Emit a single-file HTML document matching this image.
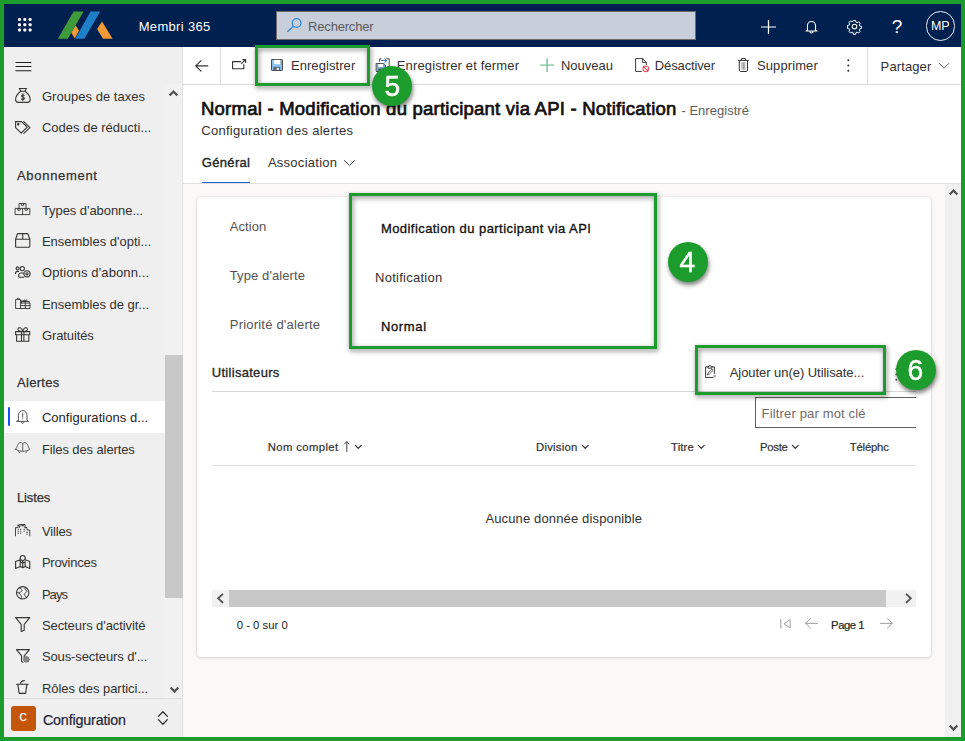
<!DOCTYPE html>
<html lang="fr">
<head>
<meta charset="utf-8">
<title>Membri 365 - Configuration des alertes</title>
<style>
*{box-sizing:border-box;margin:0;padding:0}
html,body{width:965px;height:741px;overflow:hidden;background:#fff}
body{font-family:"Liberation Sans",sans-serif;font-size:14px;color:#323130;position:relative}
.b{position:absolute}
.t{position:absolute;white-space:nowrap;line-height:20px;height:20px}
#top{left:0;top:0;width:965px;height:47px;background:#00204f}
#side{left:0;top:47px;width:182px;height:694px;background:#efefef}
#sideborder{left:182px;top:47px;width:1px;height:694px;background:#e1dfdd}
#cmdline{left:183px;top:84px;width:782px;height:1px;background:#dddbd9}
#hdrline{left:183px;top:183px;width:782px;height:1px;background:#e1dfdd}
#main{left:183px;top:184px;width:762px;height:553px;background:#faf9f8}
#vscroll{left:945px;top:184px;width:16px;height:553px;background:#f0f0f0}
#card{left:197px;top:197px;width:734px;height:460px;background:#fff;border-radius:4px;box-shadow:0 1px 3px rgba(0,0,0,.12),0 0 3px rgba(0,0,0,.10)}
#frame{left:0;top:0;width:965px;height:741px;border:4px solid #1c9c2c;z-index:50}
.hl{position:absolute;border:3px solid #1c9c2c;filter:drop-shadow(1.2px 2.6px 2.5px rgba(0,0,0,.5));z-index:20}
.badge{position:absolute;width:40px;height:40px;border-radius:50%;background:#1c9c2c;color:#fff;font-size:30px;line-height:40px;text-align:center;box-shadow:1px 3px 4px rgba(0,0,0,.5);z-index:21;-webkit-text-stroke:0.5px #fff}
.badge span{display:inline-block;transform:scaleX(.94);position:relative;top:0.2px;left:-0.9px}
svg{position:absolute;overflow:visible}
.ic{fill:none;stroke:#353433;stroke-width:1.1;stroke-linejoin:round;stroke-linecap:round}
</style>
</head>
<body>
<div class="b" id="top"></div>
<div class="b" id="side"></div>
<div class="b" id="sideborder"></div>
<div class="b" id="cmdline"></div>
<div class="b" id="hdrline"></div>
<div class="b" id="main"></div>
<div class="b" id="vscroll"></div>
<div class="b" id="card"></div>

<!-- TOP BAR -->
<svg style="left:18px;top:18px" width="14" height="14" viewBox="0 0 14 14"><g fill="#fff"><rect x="0" y="0" width="3" height="3" rx="1"/><rect x="5.3" y="0" width="3" height="3" rx="1"/><rect x="10.6" y="0" width="3" height="3" rx="1"/><rect x="0" y="5.3" width="3" height="3" rx="1"/><rect x="5.3" y="5.3" width="3" height="3" rx="1"/><rect x="10.6" y="5.3" width="3" height="3" rx="1"/><rect x="0" y="10.6" width="3" height="3" rx="1"/><rect x="5.3" y="10.6" width="3" height="3" rx="1"/><rect x="10.6" y="10.6" width="3" height="3" rx="1"/></g></svg>
<svg style="left:0;top:0" width="130" height="47" viewBox="0 0 130 47">
 <polygon points="75.7,25.6 79,30.5 74.9,38.6 71.1,32.6" fill="#f29a33"/>
 <polygon points="73.6,11.6 83.6,11.6 67.8,38.8 57.9,38.8" fill="#3f9b3a"/>
 <polygon points="90.6,11.6 100.2,11.6 84.4,38.8 75.3,38.8" fill="#1f80c8"/>
 <polygon points="102,21.6 112.6,38.8 103,38.8 97.1,28.9" fill="#f29a33"/>
</svg>
<div class="b" style="left:276px;top:11px;width:420px;height:29px;background:#c8ceda;border:1px solid #6e6b69;border-radius:0"></div>
<svg style="left:287px;top:18px" width="15" height="14" viewBox="0 0 15 14"><circle cx="9.6" cy="5" r="4.3" fill="none" stroke="#2b88d8" stroke-width="1.3"/><path d="M6.5 8.2 L0.6 13.4" stroke="#2b88d8" stroke-width="1.3" fill="none" stroke-linecap="round"/></svg>
<svg style="left:761px;top:20px" width="15" height="14" viewBox="0 0 15 14"><path d="M7.5 0V14" stroke="#fff" stroke-width="1.3" fill="none"/><path d="M0 7H15" stroke="#fff" stroke-width="1" fill="none"/></svg>
<svg style="left:805px;top:20px" width="13" height="14" viewBox="0 0 13 14"><path d="M2.5 10V5.5a4 4 0 0 1 8 0V10l1.5 1H1zM5 11.5a1.5 1.5 0 0 0 3 0" stroke="#fff" stroke-width="1.1" fill="none" stroke-linejoin="round"/></svg>
<svg style="left:847px;top:19.3px" width="15" height="15" viewBox="0 0 15 15"><circle cx="7.5" cy="7.5" r="2.3" fill="none" stroke="#fff" stroke-width="1.1"/><path d="M6.3 0.8h2.4l.4 1.9 1.2.6 1.7-1 1.7 1.7-1 1.7.6 1.2 1.9.4v2.4l-1.9.4-.6 1.2 1 1.7-1.7 1.7-1.7-1-1.2.6-.4 1.9H6.3l-.4-1.9-1.2-.6-1.7 1-1.7-1.7 1-1.7-.6-1.2-1.9-.4V6.3l1.9-.4.6-1.2-1-1.7L3 1.3l1.7 1 1.2-.6z" fill="none" stroke="#fff" stroke-width="1.1" stroke-linejoin="round" transform="translate(0.75 0.75) scale(0.9)"/></svg>
<div class="b" style="left:925.5px;top:11px;width:29.5px;height:29.5px;border:1.1px solid rgba(255,255,255,.92);border-radius:50%"></div>

<!-- SIDEBAR -->
<div class="b" style="left:165px;top:84px;width:17px;height:614px;background:#f1f1f1"></div>
<div class="b" style="left:4px;top:401px;width:161px;height:32px;background:#fff"></div>
<div class="b" style="left:7.5px;top:407px;width:2.5px;height:19px;background:#1353f5;border-radius:1px"></div>
<div class="b" style="left:165px;top:355px;width:17.5px;height:243px;background:#c8c8c8"></div>
<div class="b" style="left:4px;top:698px;width:178px;height:1px;background:#dcdcdc"></div>
<div class="b" style="left:11px;top:706px;width:25px;height:24.7px;background:#c4560c;border-radius:3px"></div>
<svg style="left:16px;top:62px" width="16" height="10" viewBox="0 0 16 10" ><g class="ic"><path d="M0 0.5H15M0 4.5H15M0 8.7H15" stroke="#201f1e" stroke-width="1.1"/></g></svg>
<svg style="left:15px;top:88px" width="16" height="15" viewBox="0 0 16 15" ><g class="ic"><path d="M4.3 0.5H11.5L9.9 3.3H5.9Z"/><path d="M5.9 3.3C3.5 5 0.6 8.6 0.6 11.6C0.6 13.6 1.8 14.4 3.4 14.4H12.4C14 14.4 15.2 13.6 15.2 11.6C15.2 8.6 12.3 5 9.9 3.3"/><path d="M9.3 7.2C8.3 6.5 6.6 6.7 6.6 7.9C6.6 9.3 9.4 8.9 9.4 10.4C9.4 11.6 7.5 11.8 6.4 11M7.9 5.8V12.4" stroke-width="1.05"/></g></svg>
<svg style="left:15px;top:121px" width="16" height="13" viewBox="0 0 16 13" ><g class="ic"><path d="M0.6 0.6H6.6L12.2 6.2L6.2 12.2L0.6 6.6Z"/><circle cx="3.3" cy="3.3" r="0.7"/><path d="M8.8 0.6L14.9 6.6L8.9 12.4"/></g></svg>
<svg style="left:15px;top:203px" width="16" height="12" viewBox="0 0 16 12" ><g class="ic"><path d="M4 5.4V0.5H11V5.4M0.5 5.4H14.8V11.6H0.5ZM7.6 5.4V11.6M6.3 0.5V2.3H8.7V0.5M2.8 5.4V7.2H5.2V5.4M10 5.4V7.2H12.4V5.4" stroke-width="0.9"/></g></svg>
<svg style="left:15px;top:233px" width="16" height="15" viewBox="0 0 16 15" ><g class="ic"><path d="M0.6 6.2L2.3 1.2C2.5 0.7 2.8 0.6 3.2 0.6H12.2C12.6 0.6 12.9 0.7 13.1 1.2L14.8 6.2V13.2C14.8 13.9 14.4 14.3 13.7 14.3H1.7C1 14.3 0.6 13.9 0.6 13.2ZM0.6 6.2H14.8M7.7 0.6V6.2" stroke-width="1.1"/></g></svg>
<svg style="left:15px;top:266px" width="16" height="12" viewBox="0 0 16 12" ><g class="ic"><circle cx="2.6" cy="2.4" r="1.5"/><circle cx="7.3" cy="2.6" r="2.1"/><path d="M0.5 7.5C0.5 6 1.4 5.4 2.6 5.4H3.6M3.6 10.8C3.6 10.8 3.2 7 6 7H8.3M4.3 11.3H8.6"/><circle cx="12" cy="7.8" r="3.1"/><circle cx="12" cy="7.8" r="1.1"/></g></svg>
<svg style="left:15px;top:297px" width="16" height="12" viewBox="0 0 16 12" ><g class="ic"><path d="M5.6 11.5H0.6V2.5H5.6V11.5M2 2.5C2 0.2 4.3 0.2 4.3 2.5M5.6 4H10M5.6 6H15V11.5H5.6M6.4 6V4.4H14.2V6M10.3 4.4V11.5M5.6 8.6H15M8.8 4.2C8 2.6 10.3 2.6 10.3 4.2C10.3 2.6 12.6 2.6 11.8 4.2" stroke-width="0.9"/></g></svg>
<svg style="left:15px;top:327px" width="16" height="15" viewBox="0 0 16 15" ><g class="ic"><path d="M0.6 4.6H14.8V7.8H0.6ZM1.6 7.8V14.3H13.8V7.8M6.5 4.6V14.3M8.9 4.6V14.3M7.7 4.4C5.4 4.6 2.4 3.8 3 1.8C3.6 -0.2 6.8 0.4 7.7 4.4C8.6 0.4 11.8 -0.2 12.4 1.8C13 3.8 10 4.6 7.7 4.4" stroke-width="1.05"/></g></svg>
<svg style="left:16px;top:410px" width="14" height="14" viewBox="0 0 14 14" ><g class="ic"><path d="M2.4 10.4V5.6C2.4 -1.1 11 -1.1 11 5.6V10.4L12.6 11.4H0.8ZM5.3 11.6C5.3 13.9 8.1 13.9 8.1 11.6M6.7 3.2V7.2M6.7 8.8V9" stroke="#505050" stroke-width="1"/></g></svg>
<svg style="left:15px;top:442px" width="16" height="12" viewBox="0 0 16 12" ><g class="ic"><path d="M0.6 7.2C2.6 5.6 2.2 0.8 5.6 0.6C6.9 0.5 7.6 1.2 7.7 2.2C7.8 1.2 8.5 0.5 9.8 0.6C13.2 0.8 12.8 5.6 14.8 7.2C13 8.6 9.6 9.6 7.7 9.2C5.8 9.6 2.4 8.6 0.6 7.2ZM7.7 2.2V9.2M3.6 9.6L4.6 10.8M11.8 9.6L10.8 10.8" stroke="#505050" stroke-width="0.9"/></g></svg>
<svg style="left:15px;top:524px" width="16" height="12" viewBox="0 0 16 12" ><g class="ic"><path d="M0.5 11.8V3.6H3V1.6H4.6V3.6M3 1.6V0.6M4.6 0.5H10V3.6M6 0.5V2M7.4 0.5V2M8.7 0.5V2M10 3.6H12V6H14.8V11.8" stroke-width="0.9"/><path d="M2.6 5.2h1.2M5 5.2h1.2M2.6 7.2h1.2M5 7.2h1.2M2.6 9.2h1.2M5 9.2h1.2M8.6 5.2h1.2M8.6 7.2h1.2M11.4 8.4h1.2M11.4 10.2h1.2" stroke-width="1.1" stroke-linecap="butt"/></g></svg>
<svg style="left:15px;top:555px" width="16" height="14" viewBox="0 0 16 14" ><g class="ic"><circle cx="7.7" cy="3" r="2.5"/><path d="M0.6 6.6L5.2 4.8V11.6L0.6 13.4ZM5.2 6.8L7.7 8L10.2 6.8V11.6L7.7 12.8L5.2 11.6M10.2 4.8L14.8 6.6V13.4L10.2 11.6M7.7 5.5V12.8"/></g></svg>
<svg style="left:16px;top:586px" width="14" height="14" viewBox="0 0 14 14" ><g class="ic"><circle cx="6.7" cy="6.8" r="6.2"/><path d="M3.2 1.8C4.4 3 6.2 2.6 6 4.6C5.8 6 3.4 5.6 3.2 7.2C3 8.8 5.4 8.6 5.6 10.2C5.7 11.4 5.2 12.2 5 12.8M9.8 1.4C8.6 2.4 8.8 3.8 10 4.2C11.2 4.6 11 6 10 6.6C8.8 7.4 7.8 8 8.6 9.4C9.4 10.6 10.4 10 10.6 11.6M0.6 6.4C1.8 6 2.6 6.6 3.2 7.2" stroke-width="0.9"/></g></svg>
<svg style="left:15px;top:617px" width="16" height="15" viewBox="0 0 16 15" ><g class="ic"><path d="M0.6 0.6H14.8L9.2 7.4V13.2L6.2 14.4V7.4Z" stroke-width="1.1"/></g></svg>
<svg style="left:16px;top:649px" width="14" height="14" viewBox="0 0 14 14" ><g class="ic"><path d="M0.5 0.6H13.4L8.2 6.8V9M5.6 6.8V12.6L7 13.2M5.6 6.8L0.5 0.6" stroke-width="1.1"/><circle cx="10.4" cy="10.4" r="2.9" fill="#8a8886" stroke="#6a6866" stroke-width="0.6"/></g></svg>
<svg style="left:16px;top:680px" width="13" height="14" viewBox="0 0 13 14" ><g class="ic"><path d="M0.5 4.2H12.2M1.8 4.2L3.2 13.4H9.6L11 4.2M4.6 4C4.6 1.6 6 0.6 8.4 0.6" stroke="#323130" stroke-width="1.1"/></g></svg>
<svg style="left:169px;top:90px" width="9" height="6" viewBox="0 0 9 6" ><g class="ic"><path d="M0.7 5.6L4.5 1.6L8.3 5.6" stroke="#505050" stroke-width="2.2" stroke-linecap="butt" stroke-linejoin="miter"/></g></svg>
<svg style="left:169.5px;top:686.5px" width="9" height="6" viewBox="0 0 9 6" ><g class="ic"><path d="M0.7 0.6L4.5 4.6L8.3 0.6" stroke="#505050" stroke-width="2.2" stroke-linecap="butt" stroke-linejoin="miter"/></g></svg>
<svg style="left:158px;top:711px" width="10" height="14" viewBox="0 0 10 14" ><g class="ic"><path d="M0.4 5.4L4.9 0.8L9.4 5.4M0.4 8.6L4.9 13.2L9.4 8.6" stroke="#2b2a29" stroke-width="1.25"/></g></svg>

<!-- COMMAND BAR -->
<div class="b" style="left:220px;top:47px;width:1px;height:37px;background:#e1dfdd"></div>
<div class="b" style="left:867px;top:47px;width:1px;height:37px;background:#e1dfdd"></div>
<svg style="left:195px;top:59.5px" width="13" height="12" viewBox="0 0 13 12" ><g class="ic"><path d="M12.8 5.9H0.8M6 0.6L0.7 5.9L6 11.2" stroke="#323130" stroke-width="1.1"/></g></svg>
<svg style="left:232px;top:59px" width="15" height="11" viewBox="0 0 15 11" ><g class="ic"><path d="M8.6 2.6H0.6V9.8H11.8V5.6M9.4 4.6L13.4 0.8M10.8 0.6H13.6V3.4" stroke="#323130" stroke-width="1.1"/></g></svg>
<svg style="left:271px;top:59px" width="12" height="12" viewBox="0 0 12 12" ><g class="ic"><rect x="0.5" y="0.5" width="11" height="11" rx="0.6" fill="#86c3f7" stroke="#4a4a4a" stroke-width="1"/><rect x="2.9" y="0.9" width="6.8" height="4.3" fill="#fff" stroke="none"/><path d="M9.9 1V5.2" stroke="#6a6a6a" stroke-width="0.6"/><rect x="2.4" y="7.8" width="6.8" height="3.4" fill="#5f6670" stroke="none"/><rect x="5.6" y="8.8" width="2.4" height="2.2" fill="#d8dde2" stroke="none"/></g></svg>
<svg style="left:376px;top:58px" width="14" height="14" viewBox="0 0 14 14" ><g class="ic"><path d="M5.2 0.8H3.6V3.2M10.6 0.8H13.2V8.6H11.6" stroke="#3b3a39" stroke-width="0.9"/><path d="M5.4 2.6H10.6M8.8 0.8L10.6 2.6L8.8 4.4" stroke="#2b6fc2" stroke-width="1"/><path d="M0.5 5.6H7.8L9.5 7.2V13.5H0.5Z" fill="#7da7d6" stroke="#3b3a39" stroke-width="0.9"/><rect x="2.3" y="6" width="4.8" height="3" fill="#fff" stroke="none"/><rect x="2.3" y="10.6" width="5" height="2.7" fill="#55606c" stroke="none"/></g></svg>
<svg style="left:540px;top:58px" width="14" height="14" viewBox="0 0 14 14" ><g class="ic"><path d="M7.1 0.2V14M0.2 7.1H14" stroke="#74c493" stroke-width="1.4" stroke-linecap="butt"/></g></svg>
<svg style="left:635px;top:58px" width="14" height="14" viewBox="0 0 14 14" ><g class="ic"><path d="M6.4 13.4H0.6V0.6H7.6L11.4 4.4V6.6M7.6 0.6V4.4H11.4" stroke="#3b3a39" stroke-width="1"/><circle cx="10.8" cy="10.8" r="2.9" stroke="#ea4a5a" stroke-width="1.05"/><path d="M8.8 8.8L12.8 12.8" stroke="#ea4a5a" stroke-width="1.05"/></g></svg>
<svg style="left:738px;top:58px" width="11" height="14" viewBox="0 0 11 14" ><g class="ic"><path d="M0.4 2.4H10.4M3.4 2.2V0.6H7.4V2.2M1.3 2.4V12.2C1.3 13 1.8 13.5 2.6 13.5H8.2C9 13.5 9.5 13 9.5 12.2V2.4" stroke="#323130" stroke-width="1"/><path d="M4 4.6V11.4M5.4 4.6V11.4M6.8 4.6V11.4" stroke="#8a8886" stroke-width="0.9"/></g></svg>
<svg style="left:847px;top:59px" width="3" height="13" viewBox="0 0 3 13" ><g class="ic"><circle cx="1.3" cy="1.3" r="1" fill="#323130" stroke="none"/><circle cx="1.3" cy="6.5" r="1" fill="#323130" stroke="none"/><circle cx="1.3" cy="11.7" r="1" fill="#323130" stroke="none"/></g></svg>
<svg style="left:939px;top:63px" width="10" height="6" viewBox="0 0 10 6" ><g class="ic"><path d="M0.4 0.5L5.1 5.2L9.8 0.5" stroke="#605e5c" stroke-width="1"/></g></svg>
<svg style="left:344px;top:160px" width="11" height="6" viewBox="0 0 11 6" ><g class="ic"><path d="M0.4 0.5L5.5 5.4L10.6 0.5" stroke="#484644" stroke-width="1"/></g></svg>

<!-- HEADER -->
<div class="b" style="left:202px;top:181.7px;width:47.5px;height:1.4px;background:#1f5fd6"></div>

<!-- FORM -->
<div class="b" style="left:212px;top:391px;width:704px;height:1px;background:#d8d6d4"></div>
<div class="b" style="left:755px;top:397px;width:161px;height:31px;border:1px solid #605e5c;border-right:none;background:#fff"></div>
<div class="b" style="left:212px;top:465px;width:704px;height:1px;background:#e1dfdd"></div>
<div class="b" style="left:212px;top:590px;width:704px;height:17px;background:#f1f1f1"></div>
<div class="b" style="left:229px;top:590px;width:657px;height:17px;background:#c8c8c8"></div>
<svg style="left:705px;top:364.8px" width="11" height="14" viewBox="0 0 11 14" ><g class="ic"><g transform="scale(1,0.93)"><path d="M3 2H0.6V13.4H8M7 2H9.4V9M3 3V1.6H4C4 0.2 6 0.2 6 1.6H7V3Z" stroke="#323130" stroke-width="1"/><path d="M2.6 10.4L3.2 8.2L7 4.4L8.2 5.6L4.4 9.6Z" stroke="#323130" stroke-width="0.8"/><path d="M9.8 10.8V13M8.7 11.9H10.9" stroke="#6f83ad" stroke-width="0.8"/></g></g></svg>
<svg style="left:343.5px;top:441px" width="6" height="11" viewBox="0 0 6 11" ><g class="ic"><path d="M2.8 10.6V0.8M0.5 3L2.8 0.7L5.1 3" stroke="#323130" stroke-width="0.9"/></g></svg>
<svg style="left:354.5px;top:445px" width="7" height="4" viewBox="0 0 7 4" ><g class="ic"><path d="M0.4 0.4L3.3 3.3L6.2 0.4" stroke="#323130" stroke-width="1.2"/></g></svg>
<svg style="left:581.5px;top:445px" width="7" height="4" viewBox="0 0 7 4" ><g class="ic"><path d="M0.4 0.4L3.3 3.3L6.2 0.4" stroke="#323130" stroke-width="1.2"/></g></svg>
<svg style="left:698px;top:445px" width="7" height="4" viewBox="0 0 7 4" ><g class="ic"><path d="M0.4 0.4L3.3 3.3L6.2 0.4" stroke="#323130" stroke-width="1.2"/></g></svg>
<svg style="left:792px;top:445px" width="7" height="4" viewBox="0 0 7 4" ><g class="ic"><path d="M0.4 0.4L3.3 3.3L6.2 0.4" stroke="#323130" stroke-width="1.2"/></g></svg>
<svg style="left:216.5px;top:593px" width="7" height="11" viewBox="0 0 7 11" ><g class="ic"><path d="M6 0.8L1.2 5.3L6 9.8" stroke="#505050" stroke-width="1.8" stroke-linecap="butt" stroke-linejoin="miter"/></g></svg>
<svg style="left:905px;top:593px" width="7" height="11" viewBox="0 0 7 11" ><g class="ic"><path d="M1 0.8L5.8 5.3L1 9.8" stroke="#505050" stroke-width="1.8" stroke-linecap="butt" stroke-linejoin="miter"/></g></svg>
<svg style="left:948.5px;top:189px" width="9" height="6" viewBox="0 0 9 6" ><g class="ic"><path d="M0.7 5.6L4.5 1.6L8.3 5.6" stroke="#505050" stroke-width="2.2" stroke-linecap="butt" stroke-linejoin="miter"/></g></svg>
<svg style="left:948.5px;top:725px" width="9" height="6" viewBox="0 0 9 6" ><g class="ic"><path d="M0.7 0.6L4.5 4.6L8.3 0.6" stroke="#505050" stroke-width="2.2" stroke-linecap="butt" stroke-linejoin="miter"/></g></svg>
<svg style="left:780px;top:618.5px" width="11" height="10" viewBox="0 0 11 10" ><g class="ic"><path d="M0.8 0.4V9.2" stroke="#a19f9d" stroke-width="1"/><path d="M9.8 0.8L4 4.8L9.8 8.8Z" stroke="#a19f9d" stroke-width="1"/></g></svg>
<svg style="left:805px;top:618px" width="13" height="11" viewBox="0 0 13 11" ><g class="ic"><path d="M12.6 5.4H0.8M5.6 0.6L0.7 5.4L5.6 10.2" stroke="#a19f9d" stroke-width="1"/></g></svg>
<svg style="left:879.5px;top:618px" width="13" height="11" viewBox="0 0 13 11" ><g class="ic"><path d="M0.4 5.4H12.2M7.4 0.6L12.3 5.4L7.4 10.2" stroke="#a19f9d" stroke-width="1"/></g></svg>
<svg style="left:895.3px;top:367.5px" width="3" height="13" viewBox="0 0 3 13" ><g class="ic"><circle cx="1.3" cy="1.3" r="1" fill="#605e5c" stroke="none"/><circle cx="1.3" cy="6.5" r="1" fill="#605e5c" stroke="none"/><circle cx="1.3" cy="11.7" r="1" fill="#605e5c" stroke="none"/></g></svg>

<div class="t" style="left:138.7px;top:17.0px;font-size:13px;color:#fff;letter-spacing:0.325px;">Membri 365</div>
<div class="t" style="left:308.1px;top:17.0px;font-size:13px;color:#5c5b5a;letter-spacing:-0.193px;">Rechercher</div>
<div class="t" style="left:930.9px;top:16.1px;font-size:12.5px;color:#fff;letter-spacing:-0.125px;">MP</div>
<div class="t" style="left:891.7px;top:17.0px;font-size:19px;color:#fff;">?</div>
<div class="t" style="left:41.9px;top:86.9px;font-size:13px;color:#323130;letter-spacing:0.036px;">Groupes de taxes</div>
<div class="t" style="left:41.9px;top:117.5px;font-size:13px;color:#323130;letter-spacing:0.014px;">Codes de réducti...</div>
<div class="t" style="left:17.0px;top:165.5px;font-size:13px;color:#323130;letter-spacing:0.693px;-webkit-text-stroke:0.25px #323130;">Abonnement</div>
<div class="t" style="left:41.9px;top:201.2px;font-size:13px;color:#323130;letter-spacing:-0.060px;">Types d'abonne...</div>
<div class="t" style="left:41.9px;top:231.9px;font-size:13px;color:#323130;letter-spacing:-0.004px;">Ensembles d'opti...</div>
<div class="t" style="left:41.9px;top:263.0px;font-size:13px;color:#323130;letter-spacing:0.126px;">Options d'abonn...</div>
<div class="t" style="left:41.9px;top:294.9px;font-size:13px;color:#323130;letter-spacing:-0.024px;">Ensembles de gr...</div>
<div class="t" style="left:41.9px;top:326.0px;font-size:13px;color:#323130;letter-spacing:-0.098px;">Gratuités</div>
<div class="t" style="left:17.0px;top:372.5px;font-size:13px;color:#323130;letter-spacing:0.300px;-webkit-text-stroke:0.25px #323130;">Alertes</div>
<div class="t" style="left:41.9px;top:407.9px;font-size:13px;color:#242424;letter-spacing:0.042px;">Configurations d...</div>
<div class="t" style="left:41.9px;top:439.5px;font-size:13px;color:#323130;letter-spacing:-0.105px;">Files des alertes</div>
<div class="t" style="left:17.0px;top:487.5px;font-size:13px;color:#323130;letter-spacing:-0.140px;-webkit-text-stroke:0.25px #323130;">Listes</div>
<div class="t" style="left:41.9px;top:522.0px;font-size:13px;color:#323130;letter-spacing:-0.135px;">Villes</div>
<div class="t" style="left:41.9px;top:553.1px;font-size:13px;color:#323130;letter-spacing:-0.251px;">Provinces</div>
<div class="t" style="left:41.9px;top:584.9px;font-size:13px;color:#323130;letter-spacing:-0.945px;">Pays</div>
<div class="t" style="left:41.9px;top:616.0px;font-size:13px;color:#323130;letter-spacing:-0.079px;">Secteurs d'activité</div>
<div class="t" style="left:41.9px;top:646.9px;font-size:13px;color:#323130;letter-spacing:-0.104px;">Sous-secteurs d'...</div>
<div class="t" style="left:41.9px;top:678.5px;font-size:13px;color:#323130;letter-spacing:-0.035px;">Rôles des partici...</div>
<div class="t" style="left:19.6px;top:707.7px;font-size:10px;color:#fff;-webkit-text-stroke:0.25px #fff;">C</div>
<div class="t" style="left:42.9px;top:710.1px;font-size:14.3px;color:#1f2638;letter-spacing:-0.155px;-webkit-text-stroke:0.22px #1f2638;">Configuration</div>
<div class="t" style="left:290.9px;top:55.5px;font-size:13px;color:#323130;letter-spacing:0.079px;">Enregistrer</div>
<div class="t" style="left:396.7px;top:55.5px;font-size:13px;color:#323130;letter-spacing:0.158px;">Enregistrer et fermer</div>
<div class="t" style="left:560.9px;top:55.5px;font-size:13px;color:#323130;letter-spacing:0.021px;">Nouveau</div>
<div class="t" style="left:654.8px;top:55.5px;font-size:13px;color:#323130;letter-spacing:-0.128px;">Désactiver</div>
<div class="t" style="left:757.0px;top:55.5px;font-size:13px;color:#323130;letter-spacing:0.100px;">Supprimer</div>
<div class="t" style="left:880.6px;top:56.5px;font-size:13px;color:#323130;letter-spacing:0.114px;">Partager</div>
<div class="t" style="left:201.0px;top:98.5px;font-size:18.5px;color:#11100f;letter-spacing:0.236px;-webkit-text-stroke:0.7px #11100f;">Normal - Modification du participant via API - Notification</div>
<div class="t" style="left:681.4px;top:100.5px;font-size:13px;color:#605e5c;letter-spacing:0.033px;">- Enregistré</div>
<div class="t" style="left:201.2px;top:121.1px;font-size:13px;color:#323130;letter-spacing:0.302px;">Configuration des alertes</div>
<div class="t" style="left:201.8px;top:152.5px;font-size:13px;color:#201f1e;letter-spacing:0.320px;-webkit-text-stroke:0.35px #201f1e;">Général</div>
<div class="t" style="left:267.9px;top:152.5px;font-size:13px;color:#323130;letter-spacing:0.269px;">Association</div>
<div class="t" style="left:229.8px;top:217.0px;font-size:13px;color:#555350;letter-spacing:0.046px;">Action</div>
<div class="t" style="left:229.8px;top:266.1px;font-size:13px;color:#555350;letter-spacing:0.095px;">Type d'alerte</div>
<div class="t" style="left:229.8px;top:314.8px;font-size:13px;color:#555350;letter-spacing:0.202px;">Priorité d'alerte</div>
<div class="t" style="left:380.9px;top:219.0px;font-size:13px;color:#11100f;letter-spacing:0.440px;-webkit-text-stroke:0.32px #11100f;">Modification du participant via API</div>
<div class="t" style="left:375.0px;top:268.1px;font-size:13px;color:#323130;letter-spacing:0.260px;">Notification</div>
<div class="t" style="left:380.9px;top:316.8px;font-size:13px;color:#11100f;letter-spacing:0.673px;-webkit-text-stroke:0.32px #11100f;">Normal</div>
<div class="t" style="left:211.8px;top:362.9px;font-size:13px;color:#242424;letter-spacing:0.288px;-webkit-text-stroke:0.3px #242424;">Utilisateurs</div>
<div class="t" style="left:729.7px;top:362.5px;font-size:13px;color:#323130;letter-spacing:-0.051px;">Ajouter un(e) Utilisate...</div>
<div class="t" style="left:761.6px;top:404.0px;font-size:13px;color:#6e6a68;letter-spacing:0.157px;">Filtrer par mot clé</div>
<div class="t" style="left:267.8px;top:436.5px;font-size:11.3px;color:#323130;letter-spacing:0.377px;-webkit-text-stroke:0.2px #323130;">Nom complet</div>
<div class="t" style="left:536.0px;top:436.5px;font-size:11.3px;color:#323130;letter-spacing:0.251px;-webkit-text-stroke:0.2px #323130;">Division</div>
<div class="t" style="left:671.0px;top:436.5px;font-size:11.3px;color:#323130;letter-spacing:0.157px;-webkit-text-stroke:0.2px #323130;">Titre</div>
<div class="t" style="left:759.9px;top:436.5px;font-size:11.3px;color:#323130;letter-spacing:-0.243px;-webkit-text-stroke:0.2px #323130;">Poste</div>
<div class="t" style="left:849.8px;top:436.5px;font-size:11.3px;color:#323130;letter-spacing:-0.198px;-webkit-text-stroke:0.2px #323130;">Téléphc</div>
<div class="t" style="left:485.4px;top:508.5px;font-size:13px;color:#323130;letter-spacing:0.144px;">Aucune donnée disponible</div>
<div class="t" style="left:236.7px;top:614.7px;font-size:11.3px;color:#201f1e;letter-spacing:0.016px;">0 - 0 sur 0</div>
<div class="t" style="left:831.1px;top:614.5px;font-size:11.3px;color:#201f1e;letter-spacing:-0.479px;-webkit-text-stroke:0.2px #201f1e;">Page 1</div>

<!-- ANNOTATIONS -->
<div class="hl" style="left:255px;top:45px;width:115px;height:41px"></div>
<div class="hl" style="left:349px;top:193px;width:308px;height:156px"></div>
<div class="hl" style="left:695px;top:345px;width:191px;height:50px"></div>
<div class="badge" style="left:372px;top:66px"><span style="left:0.2px">5</span></div>
<div class="badge" style="left:668px;top:242px"><span>4</span></div>
<div class="badge" style="left:896px;top:350px"><span>6</span></div>

<div class="b" id="frame"></div>
</body>
</html>
